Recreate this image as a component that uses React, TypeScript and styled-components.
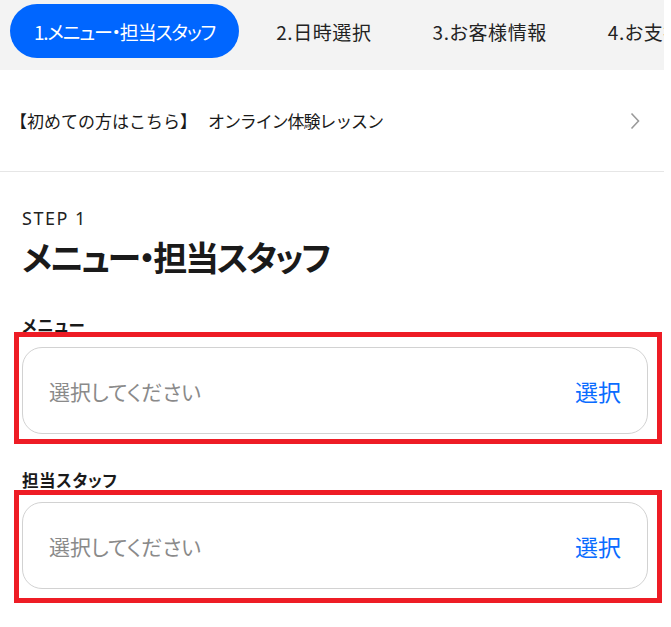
import React from "react";
import styled, { createGlobalStyle } from "styled-components";

const GlobalStyle = createGlobalStyle`
  html, body { margin: 0; padding: 0; background: #fff; }
  body {
    font-family: "Noto Sans CJK JP", "Noto Sans", sans-serif;
    color: #1a1a1a;
  }
  * { box-sizing: border-box; }
`;

const Page = styled.div`
  width: 664px;
  overflow: hidden;
`;

const TabBar = styled.nav`
  display: flex;
  align-items: flex-start;
  gap: 13px;
  height: 70px;
  padding: 4px 0 0 10px;
  background: #f3f3f3;
  overflow: hidden;
`;

const Tab = styled.div<{ $active?: boolean }>`
  flex: none;
  display: flex;
  align-items: center;
  height: 54px;
  padding: 0 24px;
  border-radius: 27px;
  font-size: 19px;
  white-space: nowrap;
  font-feature-settings: "palt";
  letter-spacing: ${(p) => (p.$active ? "-1.2px" : "0.6px")};
  background: ${(p) => (p.$active ? "#0066ff" : "transparent")};
  color: ${(p) => (p.$active ? "#ffffff" : "#222222")};
`;

const LinkRow = styled.a`
  display: flex;
  align-items: center;
  height: 102px;
  padding: 0 24px 0 10px;
  border-bottom: 1px solid #e6e6e6;
  font-size: 17px;
  color: #1a1a1a;
  text-decoration: none;
`;

const LinkText = styled.span`
  display: flex;
  gap: 11px;
  flex: 1;
  white-space: nowrap;
`;

const LinkPart = styled.span<{ $tight?: boolean }>`
  letter-spacing: ${(p) => (p.$tight ? "-1.1px" : "0")};
`;

const Section = styled.section`
  padding: 34px 16px 40px 22px;
`;

const StepLabel = styled.div`
  font-family: "Noto Sans", sans-serif;
  font-size: 18px;
  line-height: 24px;
  color: #222;
  letter-spacing: 1.5px;
`;

const Title = styled.h1`
  margin: 5px 0 0;
  font-size: 34px;
  line-height: 44px;
  font-weight: 700;
  color: #1a1a1a;
  font-feature-settings: "palt";
  letter-spacing: -2.3px;
`;

const Field = styled.div`
  margin-top: 35px;
`;

const FieldLabel = styled.div`
  font-size: 16.5px;
  line-height: 22px;
  font-weight: 700;
  color: #1a1a1a;
  margin-bottom: 11px;
  font-feature-settings: "palt";
  letter-spacing: 0.6px;
`;

const InputWrap = styled.div`
  position: relative;
`;

const SelectBox = styled.div`
  display: flex;
  align-items: center;
  justify-content: space-between;
  height: 87px;
  padding: 0 26px;
  border: 1px solid #d2d2d2;
  border-radius: 20px;
  background: #fff;
`;

const Placeholder = styled.span`
  font-size: 21px;
  color: #8a8a8a;
  font-feature-settings: "palt";
`;

const SelectAction = styled.span`
  font-size: 23px;
  color: #0a6cff;
`;

const Highlight = styled.div<{ $top: number; $bottom: number }>`
  position: absolute;
  left: -8px;
  right: -14px;
  top: ${(p) => -p.$top}px;
  bottom: ${(p) => -p.$bottom}px;
  border: 5px solid #ee1c25;
  pointer-events: none;
`;

const Chevron = () => (
  <svg width="10" height="18" viewBox="0 0 10 18" aria-hidden="true">
    <polyline points="1.5,1.5 8.5,9 1.5,16.5" fill="none" stroke="#9a9a9a" strokeWidth="1.6" />
  </svg>
);

const fields = [
  { label: "メニュー", top: 15, bottom: 10 },
  { label: "担当スタッフ", top: 12, bottom: 14 },
];

export default function App() {
  return (
    <Page>
      <GlobalStyle />
      <TabBar>
        <Tab $active>1.メニュー・担当スタッフ</Tab>
        <Tab>2.日時選択</Tab>
        <Tab>3.お客様情報</Tab>
        <Tab>4.お支払い</Tab>
      </TabBar>
      <LinkRow href="#">
        <LinkText>
          <LinkPart>【初めての方はこちら】</LinkPart>
          <LinkPart $tight>オンライン体験レッスン</LinkPart>
        </LinkText>
        <Chevron />
      </LinkRow>
      <Section>
        <StepLabel>STEP 1</StepLabel>
        <Title>メニュー・担当スタッフ</Title>
        {fields.map((f) => (
          <Field key={f.label}>
            <FieldLabel>{f.label}</FieldLabel>
            <InputWrap>
              <SelectBox>
                <Placeholder>選択してください</Placeholder>
                <SelectAction>選択</SelectAction>
              </SelectBox>
              <Highlight $top={f.top} $bottom={f.bottom} />
            </InputWrap>
          </Field>
        ))}
      </Section>
    </Page>
  );
}
